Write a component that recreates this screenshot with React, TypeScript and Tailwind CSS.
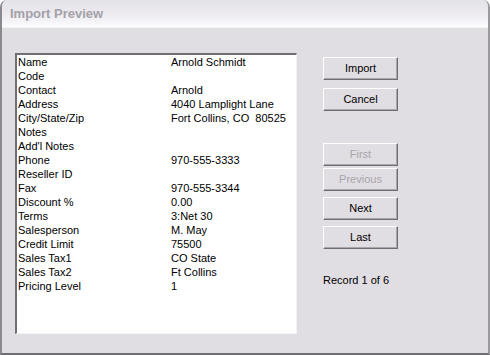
const rows: [string, string][] = [
  ['Name', 'Arnold Schmidt'],
  ['Code', ''],
  ['Contact', 'Arnold'],
  ['Address', '4040 Lamplight Lane'],
  ['City/State/Zip', 'Fort Collins, CO  80525'],
  ['Notes', ''],
  ["Add'l Notes", ''],
  ['Phone', '970-555-3333'],
  ['Reseller ID', ''],
  ['Fax', '970-555-3344'],
  ['Discount %', '0.00'],
  ['Terms', '3:Net 30'],
  ['Salesperson', 'M. May'],
  ['Credit Limit', '75500'],
  ['Sales Tax1', 'CO State'],
  ['Sales Tax2', 'Ft Collins'],
  ['Pricing Level', '1'],
];

function Btn({ label, disabled, className = '' }: { label: string; disabled?: boolean; className?: string }) {
  return (
    <button
      disabled={disabled}
      className={`w-[75px] h-[23px] bg-[#e0dde3] border border-t-white border-l-white border-r-[#6e6e72] border-b-[#6e6e72] shadow-[inset_-1px_-1px_0_#a9a7ad] text-[11px] leading-none ${
        disabled ? 'text-[#a8a7ab]' : 'text-black'
      } ${className}`}
    >
      {label}
    </button>
  );
}

export default function App() {
  return (
    <div className="w-[490px] h-[355px] bg-[#e0dde3] border-l-2 border-r-2 border-b-2 border-l-[#8a898e] border-r-[#9a999e] border-b-[#6f6e73] rounded-t-[7px] overflow-hidden flex flex-col font-['Liberation_Sans',Arial,sans-serif]">
      {/* title bar */}
      <div className="h-[28px] shrink-0 bg-gradient-to-b from-[#e4e3e8] via-[#eceaf0] to-[#fbfbfd] border-b border-[#f4f3f6] flex items-center pl-[8px]">
        <span className="text-[13px] font-bold text-[#a3a2a8]">Import Preview</span>
      </div>

      <div className="flex pt-[25px] pl-[13px]">
        {/* record list */}
        <div className="w-[282px] h-[281px] bg-white border-t-2 border-l-2 border-r border-b border-t-[#6f6e72] border-l-[#6f6e72] border-r-[#f2f2f2] border-b-[#f2f2f2] pl-[1px] text-[11px] text-black">
          {rows.map(([label, value]) => (
            <div key={label} className="flex h-[14px] items-center">
              <span className="w-[153px] shrink-0">{label}</span>
              <span className="whitespace-pre">{value}</span>
            </div>
          ))}
        </div>

        {/* buttons */}
        <div className="ml-[26px] pt-[4px] flex flex-col">
          <Btn label="Import" />
          <Btn label="Cancel" className="mt-[8px]" />
          <Btn label="First" disabled className="mt-[32px]" />
          <Btn label="Previous" disabled className="mt-[2px]" />
          <Btn label="Next" className="mt-[6px]" />
          <Btn label="Last" className="mt-[6px]" />
          <span className="mt-[23px] text-[11px] text-black">Record 1 of 6</span>
        </div>
      </div>
    </div>
  );
}
